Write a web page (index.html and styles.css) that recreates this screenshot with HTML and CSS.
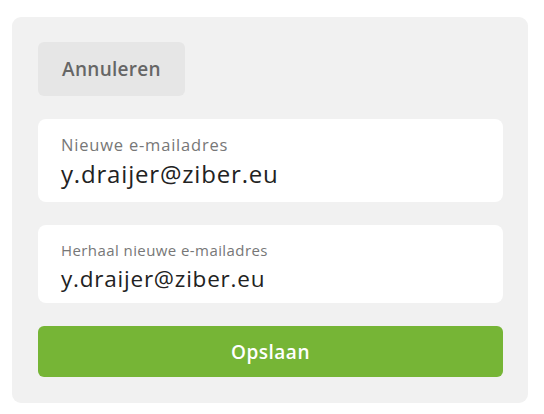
FILE: index.html
```html
<!DOCTYPE html>
<html lang="nl">
<head>
<meta charset="utf-8">
<title>E-mailadres wijzigen</title>
<link rel="stylesheet" href="styles.css">
</head>
<body>
<div class="panel">
  <button class="btn-cancel" type="button">Annuleren</button>
  <div class="field field--primary">
    <div class="field-label">Nieuwe e-mailadres</div>
    <div class="field-value">y.draijer@ziber.eu</div>
  </div>
  <div class="field field--repeat">
    <div class="field-label">Herhaal nieuwe e-mailadres</div>
    <div class="field-value">y.draijer@ziber.eu</div>
  </div>
  <button class="btn-save" type="button">Opslaan</button>
</div>
</body>
</html>
```
FILE: styles.css
```css
html, body {
  margin: 0;
  padding: 0;
  background: #ffffff;
  font-family: "Open Sans", "Noto Sans", sans-serif;
}

.panel {
  margin: 17px 16px 0 12px;
  background: #f1f1f1;
  border-radius: 9px;
  padding: 25px 25px 26px 26px;
  display: flex;
  flex-direction: column;
  gap: 23px;
}

.btn-cancel {
  align-self: flex-start;
  width: 147px;
  height: 54px;
  border: none;
  border-radius: 6px;
  background: #e6e6e6;
  color: #666666;
  font-family: "Open Sans", sans-serif;
  font-weight: 600;
  font-size: 19px;
  letter-spacing: 0.3px;
  padding: 0;
}

.field {
  background: #ffffff;
  border-radius: 8px;
  padding: 15px 23px 6px 23px;
}

.field-label {
  line-height: 21px;
  color: #777777;
}

.field-value {
  line-height: 36px;
  color: #222222;
}

.field--primary {
  padding-bottom: 10px;
}

.field--primary .field-label {
  font-size: 16.5px;
  letter-spacing: 0.8px;
}

.field--primary .field-value {
  margin-top: 1px;
  font-size: 24px;
  letter-spacing: 0.82px;
}

.field--repeat .field-label {
  font-size: 15px;
  letter-spacing: 0.42px;
}

.field--repeat .field-value {
  font-size: 22.5px;
  letter-spacing: 0.78px;
}

.btn-save {
  height: 51px;
  border: none;
  border-radius: 6px;
  background: #76b536;
  color: #ffffff;
  font-family: "Open Sans", sans-serif;
  font-weight: 600;
  font-size: 19px;
  letter-spacing: 0.5px;
  padding: 0;
}
```
